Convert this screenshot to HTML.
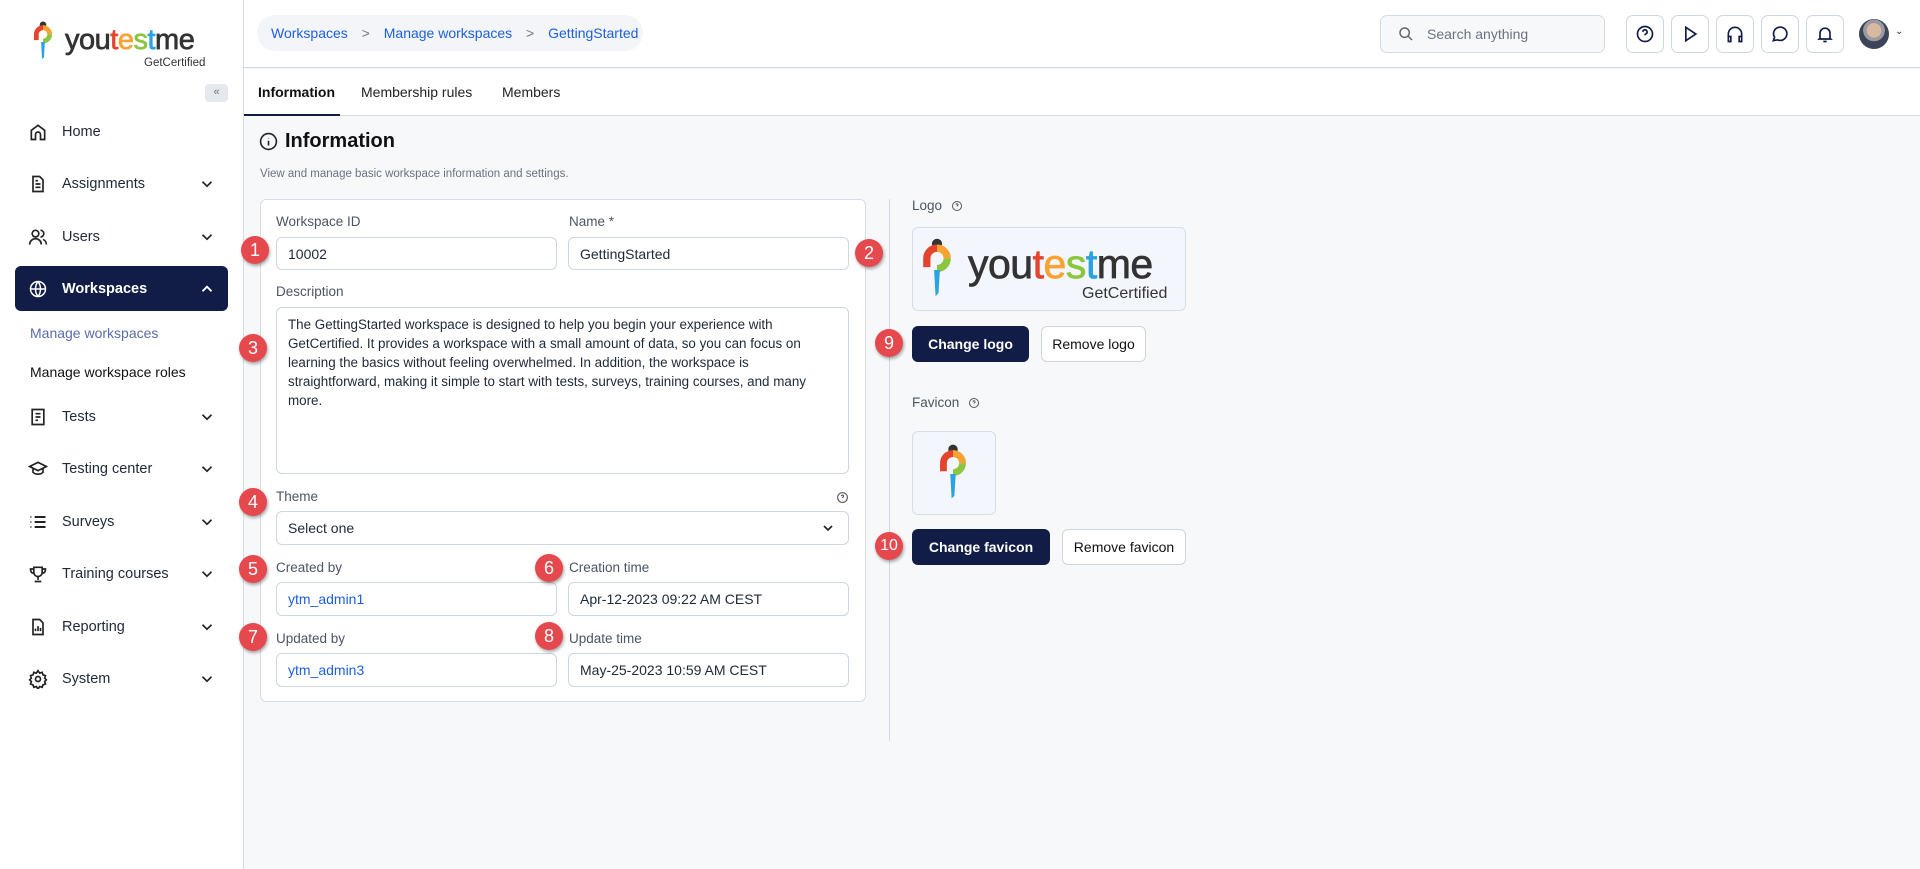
<!DOCTYPE html>
<html><head><meta charset="utf-8"><style>
*{box-sizing:border-box;margin:0;padding:0}
body{width:1920px;height:869px;overflow:hidden;font-family:"Liberation Sans",sans-serif;background:#f7f8fa;color:#1f2937;position:relative}
.a{position:absolute}
.side{left:0;top:0;width:244px;height:869px;background:#fff;border-right:1px solid #d7dde5}
.hdr{left:244px;top:0;width:1676px;height:68px;background:#fff;border-bottom:1px solid #cfd8e3}
.tabs{left:244px;top:69px;width:1676px;height:47px;background:#fff;border-bottom:1px solid #cfd8e3}
.nav{left:28px;font-size:14.5px;color:#1f2937;display:flex;align-items:center;height:24px}
.nav svg{margin-right:14px}
.lbl{font-size:13.5px;color:#4b5563}
.inp{background:#fff;border:1px solid #cfd6df;border-radius:6px;font-size:14px;padding:0 11px;display:flex;align-items:center;color:#1f2937}
.mk{width:28px;height:28px;border-radius:50%;background:#e5484d;color:#fff;font-size:18px;display:flex;align-items:center;justify-content:center;box-shadow:1px 2px 3px rgba(0,0,0,.35)}
.btnd{background:#111d47;color:#fff;border-radius:6px;font-size:14px;font-weight:bold;display:flex;align-items:center;justify-content:center}
.btnw{background:#fff;color:#111;border:1px solid #cfd6df;border-radius:6px;font-size:14px;display:flex;align-items:center;justify-content:center}
.ib{width:38px;height:38px;top:15px;border:1px solid #cfd6df;border-radius:7px;background:#fff;display:flex;align-items:center;justify-content:center}
.lg{font-weight:normal;color:#333;-webkit-text-stroke:0.7px currentColor;letter-spacing:-0.5px;white-space:nowrap}
</style></head><body>
<div class="a side"></div>
<!-- logo -->
<svg class="a" style="left:33px;top:21px" width="20" height="42" viewBox="0 0 20 44"><circle cx="10" cy="4" r="3.5" fill="#333"/><path d="M3 20 V14 a7 7 0 0 1 7-7" stroke="#e4442e" stroke-width="5" fill="none"/><path d="M10 7 a7 7 0 0 1 7 7" stroke="#f7a334" stroke-width="5" fill="none"/><path d="M17 14 a7 7 0 0 1 -7 7" stroke="#8cc63f" stroke-width="5" fill="none"/><path d="M8 22 L12 22 L11 38 L9 40 Z" fill="#2aa3e0"/></svg>
<div class="a lg" style="left:65px;top:24px;font-size:29px">you<span style="color:#e4442e">t</span><span style="color:#f7a334">e</span><span style="color:#8cc63f">s</span><span style="color:#2aa3e0">t</span>me</div>
<div class="a" style="left:144px;top:57px;font-size:11.5px;color:#333">GetCertified</div>
<div class="a" style="left:205px;top:84px;width:23px;height:18px;background:#e5e8ed;border-radius:4px;font-size:11px;color:#777;text-align:center;line-height:17px">«</div>

<div class="a nav" style="top:120px"><svg width="20" height="20" viewBox="0 0 24 24" fill="none" stroke="#222" stroke-width="2"><path d="M4 21V10l8-6 8 6v11h-5v-6a3 3 0 0 0-6 0v6z"/></svg>Home</div>
<div class="a nav" style="top:172px"><svg width="20" height="20" viewBox="0 0 24 24" fill="none" stroke="#222" stroke-width="2"><path d="M6 3h8l4 4v14H6z M9 12h6 M9 16h6 M9 8h3"/></svg>Assignments</div>
<div class="a nav" style="top:225px"><svg width="20" height="20" viewBox="0 0 24 24" fill="none" stroke="#222" stroke-width="2"><circle cx="9" cy="8" r="4"/><path d="M2 21a7 7 0 0 1 14 0 M15 4a4 4 0 0 1 0 8 M18 15a6 6 0 0 1 4 6"/></svg>Users</div>
<div class="a" style="left:15px;top:266px;width:213px;height:45px;background:#111d47;border-radius:6px"></div>
<div class="a nav" style="top:277px;color:#fff;font-weight:bold"><svg width="20" height="20" viewBox="0 0 24 24" fill="none" stroke="#fff" stroke-width="1.8"><circle cx="12" cy="12" r="9"/><path d="M3 12h18 M12 3c-4 5-4 13 0 18 M12 3c4 5 4 13 0 18"/></svg>Workspaces</div>
<svg class="a" style="left:198px;top:280px" width="18" height="18" viewBox="0 0 24 24" fill="none" stroke="#fff" stroke-width="2.5"><path d="M6 15l6-6 6 6"/></svg>
<div class="a" style="left:30px;top:325px;font-size:14px;color:#5b6ca8">Manage workspaces</div>
<div class="a" style="left:30px;top:364px;font-size:14px;color:#111">Manage workspace roles</div>
<div class="a nav" style="top:405px"><svg width="20" height="20" viewBox="0 0 24 24" fill="none" stroke="#222" stroke-width="2"><path d="M5 3h14v18H5z M9 8h6 M9 12h6 M9 16h3"/></svg>Tests</div>
<div class="a nav" style="top:457px"><svg width="20" height="20" viewBox="0 0 24 24" fill="none" stroke="#222" stroke-width="2"><path d="M2 9l10-5 10 5-10 5z M6 11v5c3 3 9 3 12 0v-5"/></svg>Testing center</div>
<div class="a nav" style="top:510px"><svg width="20" height="20" viewBox="0 0 24 24" fill="none" stroke="#222" stroke-width="2.4"><path d="M3 6h1 M8 6h13 M3 12h1 M8 12h13 M3 18h1 M8 18h13"/></svg>Surveys</div>
<div class="a nav" style="top:562px"><svg width="20" height="20" viewBox="0 0 24 24" fill="none" stroke="#222" stroke-width="2"><path d="M7 4h10v6a5 5 0 0 1-10 0z M7 6H3c0 4 2 5 4 5 M17 6h4c0 4-2 5-4 5 M12 15v4 M8 21h8"/></svg>Training courses</div>
<div class="a nav" style="top:615px"><svg width="20" height="20" viewBox="0 0 24 24" fill="none" stroke="#222" stroke-width="2"><path d="M6 3h8l4 4v14H6z M9 17v-3 M12 17v-6 M15 17v-4"/></svg>Reporting</div>
<div class="a nav" style="top:667px"><svg width="20" height="20" viewBox="0 0 24 24" fill="none" stroke="#222" stroke-width="2"><circle cx="12" cy="12" r="3"/><path d="M12 2l2 3 3-1 1 3 3 1-1 3 2 2-2 2 1 3-3 1-1 3-3-1-2 3-2-3-3 1-1-3-3-1 1-3-2-2 2-2-1-3 3-1 1-3 3 1z"/></svg>System</div>
<svg class="a" style="left:198px;top:175px" width="18" height="18" viewBox="0 0 24 24" fill="none" stroke="#222" stroke-width="2.2"><path d="M6 9l6 6 6-6"/></svg>
<svg class="a" style="left:198px;top:228px" width="18" height="18" viewBox="0 0 24 24" fill="none" stroke="#222" stroke-width="2.2"><path d="M6 9l6 6 6-6"/></svg>
<svg class="a" style="left:198px;top:408px" width="18" height="18" viewBox="0 0 24 24" fill="none" stroke="#222" stroke-width="2.2"><path d="M6 9l6 6 6-6"/></svg>
<svg class="a" style="left:198px;top:460px" width="18" height="18" viewBox="0 0 24 24" fill="none" stroke="#222" stroke-width="2.2"><path d="M6 9l6 6 6-6"/></svg>
<svg class="a" style="left:198px;top:513px" width="18" height="18" viewBox="0 0 24 24" fill="none" stroke="#222" stroke-width="2.2"><path d="M6 9l6 6 6-6"/></svg>
<svg class="a" style="left:198px;top:565px" width="18" height="18" viewBox="0 0 24 24" fill="none" stroke="#222" stroke-width="2.2"><path d="M6 9l6 6 6-6"/></svg>
<svg class="a" style="left:198px;top:618px" width="18" height="18" viewBox="0 0 24 24" fill="none" stroke="#222" stroke-width="2.2"><path d="M6 9l6 6 6-6"/></svg>
<svg class="a" style="left:198px;top:670px" width="18" height="18" viewBox="0 0 24 24" fill="none" stroke="#222" stroke-width="2.2"><path d="M6 9l6 6 6-6"/></svg>

<!-- header -->
<div class="a hdr"></div>
<div class="a" style="left:257px;top:15px;width:386px;height:36px;background:#f3f5f8;border-radius:18px;font-size:14px;color:#1d5fe0;line-height:36px;padding-left:14px;white-space:nowrap">Workspaces <span style="color:#777;margin:0 10px">&gt;</span> Manage workspaces <span style="color:#777;margin:0 10px">&gt;</span> GettingStarted</div>
<div class="a" style="left:1380px;top:15px;width:225px;height:38px;background:#f7f8fa;border:1px solid #d5dbe3;border-radius:7px;font-size:14px;color:#6b7280;line-height:36px;padding-left:46px">Search anything</div>
<svg class="a" style="left:1398px;top:26px" width="16" height="16" viewBox="0 0 24 24" fill="none" stroke="#666" stroke-width="2.2"><circle cx="10" cy="10" r="7"/><path d="M15 15l6 6"/></svg>
<div class="a ib" style="left:1626px"><svg width="20" height="20" viewBox="0 0 24 24" fill="none" stroke="#111d47" stroke-width="2"><circle cx="12" cy="12" r="9"/><path d="M9.5 9.5a2.5 2.5 0 1 1 3.5 2.3c-.7.4-1 .9-1 1.7 M12 17h.01"/></svg></div>
<div class="a ib" style="left:1671px"><svg width="20" height="20" viewBox="0 0 24 24" fill="none" stroke="#111d47" stroke-width="2"><path d="M7 4l12 8-12 8z"/></svg></div>
<div class="a ib" style="left:1716px"><svg width="20" height="20" viewBox="0 0 24 24" fill="none" stroke="#111d47" stroke-width="2"><path d="M4 17v-5a8 8 0 0 1 16 0v5 M4 15h3v6H4z M17 15h3v6h-3z"/></svg></div>
<div class="a ib" style="left:1761px"><svg width="20" height="20" viewBox="0 0 24 24" fill="none" stroke="#111d47" stroke-width="2"><path d="M4 20l1.5-4A8 8 0 1 1 9 19z"/></svg></div>
<div class="a ib" style="left:1806px"><svg width="20" height="20" viewBox="0 0 24 24" fill="none" stroke="#111d47" stroke-width="2"><path d="M6 17V11a6 6 0 0 1 12 0v6l1 1H5z M10 21h4"/></svg></div>
<div class="a" style="left:1859px;top:19px;width:30px;height:30px;border-radius:50%;background:radial-gradient(circle at 50% 38%,#d9b8a0 0 30%,#9a9aa0 31% 45%,#3c4457 46%)"></div>
<div class="a" style="left:1895px;top:26px;font-size:10px;color:#333">⌄</div>

<!-- tabs -->
<div class="a tabs"></div>
<div class="a" style="left:258px;top:84px;font-size:14px;font-weight:bold;color:#111">Information</div>
<div class="a" style="left:361px;top:84px;font-size:14px;color:#222">Membership rules</div>
<div class="a" style="left:502px;top:84px;font-size:14px;color:#222">Members</div>
<div class="a" style="left:244px;top:114px;width:96px;height:2px;background:#111d47"></div>

<svg class="a" style="left:259px;top:132px" width="19" height="19" viewBox="0 0 24 24" fill="none" stroke="#222" stroke-width="2"><circle cx="12" cy="12" r="10"/><path d="M12 11v6 M12 7.5v.5"/></svg>
<div class="a" style="left:285px;top:130px;font-size:20px;font-weight:bold;color:#111">Information</div>
<div class="a" style="left:260px;top:168px;font-size:11.5px;color:#6b7280">View and manage basic workspace information and settings.</div>

<!-- card -->
<div class="a" style="left:260px;top:199px;width:606px;height:503px;background:#fff;border:1px solid #d7dde5;border-radius:6px"></div>
<div class="a lbl" style="left:276px;top:214px">Workspace ID</div>
<div class="a lbl" style="left:569px;top:214px">Name *</div>
<div class="a inp" style="left:276px;top:237px;width:281px;height:33px">10002</div>
<div class="a inp" style="left:568px;top:237px;width:281px;height:33px">GettingStarted</div>
<div class="a lbl" style="left:276px;top:284px">Description</div>
<div class="a inp" style="left:276px;top:307px;width:573px;height:167px;align-items:flex-start;padding-top:7px;line-height:19px;font-size:13.4px">The GettingStarted workspace is designed to help you begin your experience with GetCertified. It provides a workspace with a small amount of data, so you can focus on learning the basics without feeling overwhelmed. In addition, the workspace is straightforward, making it simple to start with tests, surveys, training courses, and many more.</div>
<div class="a lbl" style="left:276px;top:489px">Theme</div>
<svg class="a" style="left:836px;top:491px" width="13" height="13" viewBox="0 0 24 24" fill="none" stroke="#555" stroke-width="2"><circle cx="12" cy="12" r="9"/><path d="M10 9.5a2 2 0 1 1 2.5 2c-.5.3-.5.7-.5 1.5 M12 16.5v.5"/></svg>
<div class="a inp" style="left:276px;top:511px;width:573px;height:34px">Select one</div>
<svg class="a" style="left:820px;top:520px" width="16" height="16" viewBox="0 0 24 24" fill="none" stroke="#222" stroke-width="2.5"><path d="M6 9l6 6 6-6"/></svg>
<div class="a lbl" style="left:276px;top:560px">Created by</div>
<div class="a lbl" style="left:569px;top:560px">Creation time</div>
<div class="a inp" style="left:276px;top:582px;width:281px;height:34px;color:#1d5fe0">ytm_admin1</div>
<div class="a inp" style="left:568px;top:582px;width:281px;height:34px">Apr-12-2023 09:22 AM CEST</div>
<div class="a lbl" style="left:276px;top:631px">Updated by</div>
<div class="a lbl" style="left:569px;top:631px">Update time</div>
<div class="a inp" style="left:276px;top:653px;width:281px;height:34px;color:#1d5fe0">ytm_admin3</div>
<div class="a inp" style="left:568px;top:653px;width:281px;height:34px">May-25-2023 10:59 AM CEST</div>

<div class="a" style="left:889px;top:199px;width:1px;height:542px;background:#d3d9e1"></div>

<!-- right -->
<div class="a lbl" style="left:912px;top:198px">Logo</div>
<svg class="a" style="left:951px;top:200px" width="12" height="12" viewBox="0 0 24 24" fill="none" stroke="#555" stroke-width="2"><circle cx="12" cy="12" r="9"/><path d="M10 9.5a2 2 0 1 1 2.5 2c-.5.3-.5.7-.5 1.5 M12 16.5v.5"/></svg>
<div class="a" style="left:912px;top:227px;width:274px;height:84px;background:#f3f6fc;border:1px solid #d7dde5;border-radius:6px"></div>
<svg class="a" style="left:922px;top:238px" width="30" height="64" viewBox="0 0 20 44"><circle cx="10" cy="4" r="3.5" fill="#333"/><path d="M3 20 V14 a7 7 0 0 1 7-7" stroke="#e4442e" stroke-width="5" fill="none"/><path d="M10 7 a7 7 0 0 1 7 7" stroke="#f7a334" stroke-width="5" fill="none"/><path d="M17 14 a7 7 0 0 1 -7 7" stroke="#8cc63f" stroke-width="5" fill="none"/><path d="M8 22 L12 22 L11 38 L9 40 Z" fill="#2aa3e0"/></svg>
<div class="a lg" style="left:968px;top:240px;font-size:41px;line-height:48px">you<span style="color:#e4442e">t</span><span style="color:#f7a334">e</span><span style="color:#8cc63f">s</span><span style="color:#2aa3e0">t</span>me</div>
<div class="a" style="left:1082px;top:285px;font-size:16px;color:#333">GetCertified</div>
<div class="a btnd" style="left:912px;top:326px;width:117px;height:36px">Change logo</div>
<div class="a btnw" style="left:1041px;top:326px;width:105px;height:36px">Remove logo</div>
<div class="a lbl" style="left:912px;top:395px">Favicon</div>
<svg class="a" style="left:968px;top:397px" width="12" height="12" viewBox="0 0 24 24" fill="none" stroke="#555" stroke-width="2"><circle cx="12" cy="12" r="9"/><path d="M10 9.5a2 2 0 1 1 2.5 2c-.5.3-.5.7-.5 1.5 M12 16.5v.5"/></svg>
<div class="a" style="left:912px;top:431px;width:84px;height:84px;background:#f3f6fc;border:1px solid #d7dde5;border-radius:6px"></div>
<svg class="a" style="left:939px;top:444px" width="28" height="60" viewBox="0 0 20 44"><circle cx="10" cy="4" r="3.5" fill="#333"/><path d="M3 20 V14 a7 7 0 0 1 7-7" stroke="#e4442e" stroke-width="5" fill="none"/><path d="M10 7 a7 7 0 0 1 7 7" stroke="#f7a334" stroke-width="5" fill="none"/><path d="M17 14 a7 7 0 0 1 -7 7" stroke="#8cc63f" stroke-width="5" fill="none"/><path d="M8 22 L12 22 L11 38 L9 40 Z" fill="#2aa3e0"/></svg>
<div class="a btnd" style="left:912px;top:529px;width:138px;height:36px">Change favicon</div>
<div class="a btnw" style="left:1062px;top:529px;width:124px;height:36px">Remove favicon</div>

<!-- markers -->
<div class="a mk" style="left:241px;top:236px">1</div>
<div class="a mk" style="left:855px;top:239px">2</div>
<div class="a mk" style="left:239px;top:334px">3</div>
<div class="a mk" style="left:239px;top:488px">4</div>
<div class="a mk" style="left:239px;top:555px">5</div>
<div class="a mk" style="left:535px;top:554px">6</div>
<div class="a mk" style="left:239px;top:623px">7</div>
<div class="a mk" style="left:535px;top:622px">8</div>
<div class="a mk" style="left:875px;top:329px">9</div>
<div class="a mk" style="left:875px;top:532px;font-size:16px">10</div>
</body></html>
